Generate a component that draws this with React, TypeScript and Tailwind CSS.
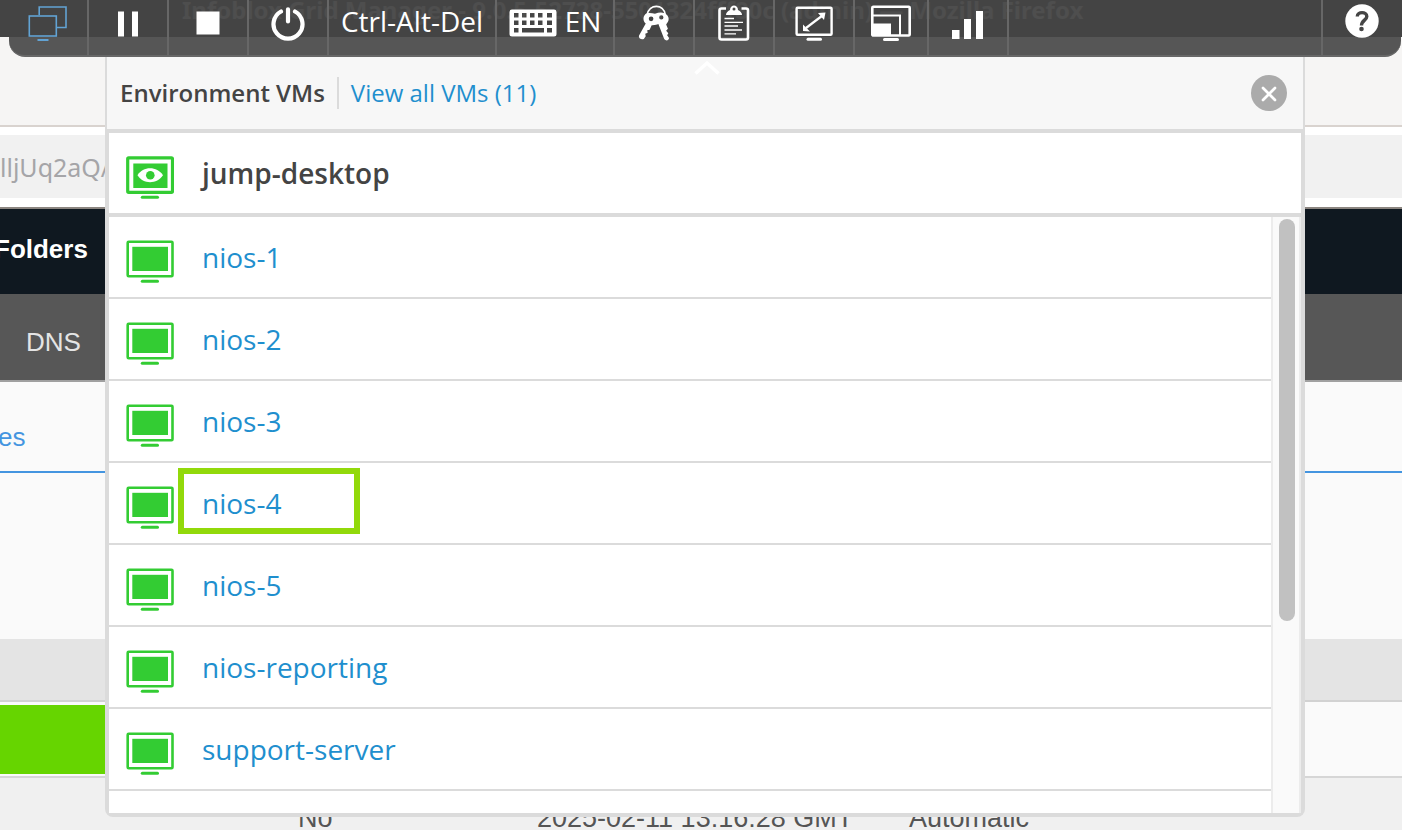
import React from "react";

const machines = ["nios-1", "nios-2", "nios-3", "nios-4", "nios-5", "nios-reporting", "support-server", "testing-win"];

function VmIcon({ active = false }: { active?: boolean }) {
  return (
    <svg viewBox="0 0 48 44" className="h-11 w-12 shrink-0" fill="none" aria-hidden="true">
      <rect x="1.7" y="1.8" width="44.800" height="34.500" rx="1" stroke="#33cc33" strokeWidth={active ? 3.2 : 2.6} />
      {active ? <rect x="7.300" y="7.500" width="34.200" height="24.500" fill="#33cc33" /> : <rect x="6.300" y="6.800" width="35.700" height="24.200" fill="#33cc33" />}
      {active && (
        <>
          <path d="M11.500 19.300C17 10 31 10 37 19.300C31 28.500 17 28.500 11.500 19.300Z" fill="#fff" />
          <circle cx="24.300" cy="19.300" r="4.300" fill="#33cc33" />
        </>
      )}
      <path d="M16.300 41.300H31.500" stroke="#33cc33" strokeWidth="3" strokeLinecap="round" />
    </svg>
  );
}

function VmsIcon() {
  return (
    <svg viewBox="0 0 40 36" className="h-9 w-10" fill="none" stroke="#62a3d4" strokeWidth="1.600" aria-hidden="true">
      <path d="M11.200 10V2H38V22.500H29" />
      <rect x="1.300" y="11" width="27" height="20" />
      <path d="M9.500 35H20.500" strokeWidth="2" />
    </svg>
  );
}

function PauseIcon() {
  return (
    <svg viewBox="0 0 22 26" className="h-[26px] w-[22px]" fill="#fff" aria-hidden="true">
      <path d="M1 0.500H7V25.500H1ZM15 0.500H21V25.500H15Z" />
    </svg>
  );
}

function StopIcon() {
  return (
    <svg viewBox="0 0 24 24" className="h-6 w-6" fill="#fff" aria-hidden="true">
      <rect y="0.500" x="0.500" width="23" height="23" />
    </svg>
  );
}

function PowerIcon() {
  return (
    <svg viewBox="0 0 34 34" className="size-[34px]" fill="none" stroke="#fff" strokeWidth="4.200" strokeLinecap="round" aria-hidden="true">
      <path d="M17 2.300V14.500M10 4.500A14.500 14.500 0 1 0 24 4.500" />
    </svg>
  );
}

function KeyboardIcon() {
  return (
    <svg viewBox="0 0 48 28" className="h-7 w-12" fill="#fff" aria-hidden="true">
      <path
        fillRule="evenodd"
        d="M3 .6H45A2.500 2.500 0 0 1 47.500 3V25A2.500 2.500 0 0 1 45 27.500H3A2.500 2.500 0 0 1 .5 25V3A2.500 2.500 0 0 1 3 .6ZM5 4V8.500H9.500V4ZM13 4V8.500H17.500V4ZM21 4V8.500H25.500V4ZM29 4V8.500H33.500V4ZM38 4V8.500H43V4ZM5 11.500V16H9.500V11.500ZM13 11.500V16H17.500V11.500ZM21 11.500V16H25.500V11.500ZM29 11.500V16H33.500V11.500ZM38 11.500V16H43V11.500ZM5 19V23.500H9.500V19ZM13 19V23.500H35V19ZM38 19V23.500H43V19Z"
      />
    </svg>
  );
}

function KeysIcon() {
  return (
    <svg viewBox="0 0 32 37" className="h-9 w-8" fill="#fff" aria-hidden="true">
      <path d="M9 10C11-1.500 26-1.500 27.500 10" fill="none" stroke="#fff" strokeWidth="1.800" />
      <path
        fillRule="evenodd"
        d="M7 9.500C10 7.500 14 8.500 17 9C22 7 27 7 30 11C32.500 15 30 18 28.500 20L30.300 24.500L28.500 26.500L30.700 29L29.500 31L31.500 34C31 37 28 37 26.500 35L20.500 19.500C17 21 14 20.500 13.500 21L11.500 25.500L9 26L9.500 28.500L7 29.500L7.500 32L5.500 35C3 36 0 34.500 .5 31.500L7.500 19C4 16 5 11.500 7 9.500ZM13 11.800A2.400 2.400 0 1 0 13 16.600A2.400 2.400 0 1 0 13 11.800ZM23.500 10.600A2.200 2.200 0 1 0 23.500 15A2.200 2.200 0 1 0 23.500 10.600Z"
      />
    </svg>
  );
}

function ClipboardIcon() {
  return (
    <svg viewBox="0 0 32 36" className="h-9 w-8" fill="none" stroke="#fff" aria-hidden="true">
      <path d="M8 3.500H3.500Q1.500 3.500 1.500 5.500V32.500Q1.500 34.500 3.500 34.500H28Q30 34.500 30 32.500V5.500Q30 3.500 28 3.500H23.500" strokeWidth="2.600" />
      <path fillRule="evenodd" d="M12 5C12-1 20-1 20 5Q24 7 24 10H8Q8 7 12 5ZM16 2.600A1.500 1.500 0 1 0 16 5.600A1.500 1.500 0 1 0 16 2.600Z" fill="#fff" stroke="none" />
      <path d="M6.500 13.500H16M6.500 17.300H25M6.500 21H20M6.500 25H24M6.500 28.800H18" strokeWidth="1.300" />
    </svg>
  );
}

function ExpandIcon() {
  return (
    <svg viewBox="0 0 38 36" className="h-9 w-[38px]" fill="none" stroke="#fff" aria-hidden="true">
      <rect x="1.600" y="2.800" width="35" height="27" rx="1" strokeWidth="2.400" />
      <path d="M11 23L27.500 10.500" strokeWidth="2.200" />
      <path d="M23 8L30.500 7.500L29 15ZM8 19.500V26L15 26.500Z" fill="#fff" stroke="none" />
      <path d="M13 34.300H25.500" strokeWidth="3" strokeLinecap="round" />
    </svg>
  );
}

function ResizeIcon() {
  return (
    <svg viewBox="0 0 40 36" className="h-9 w-10" fill="none" stroke="#fff" aria-hidden="true">
      <rect x="1.300" y="1.800" width="37.400" height="28.700" rx="1" strokeWidth="2.600" />
      <path d="M2 10.500H29V30" strokeWidth="2" />
      <path d="M1 18.500H20V31H1Z" fill="#fff" stroke="none" />
      <path d="M13.500 34.500H26.500" strokeWidth="3" strokeLinecap="round" />
    </svg>
  );
}

function SignalIcon() {
  return (
    <svg viewBox="0 0 32 28" className="h-7 w-8" fill="#fff" aria-hidden="true">
      <path d="M0 19H7.500V28H0ZM12 8H19V28H12ZM24 0H31V28H24Z" />
    </svg>
  );
}

function HelpIcon() {
  return (
    <svg viewBox="0 0 34 34" className="size-[34px]" fill="none" aria-hidden="true">
      <circle cx="17" cy="17" r="16.700" fill="#fff" />
      <path d="M12.300 12.500C12.300 7.300 21.800 7.300 21.800 12.500C21.800 16 16.500 16.500 16.500 21.500" stroke="#454545" strokeWidth="3.400" />
      <circle cx="16.500" cy="25" r="2.300" fill="#454545" />
    </svg>
  );
}

function ToolButton({ label, width, children }: { label: string; width: string; children: React.ReactNode }) {
  return (
    <button type="button" aria-label={label} className={`flex shrink-0 items-start justify-center border-r-2 border-[#676767] pt-[5px] ${width}`}>
      {children}
    </button>
  );
}

function Toolbar() {
  return (
    <header className="absolute inset-x-0 top-0 z-20 mr-px ml-[9px] flex h-[57px] overflow-hidden rounded-b-2xl border-b-2 border-[#676767] bg-[#454545]/90 text-white">
      <ToolButton label="Virtual machines" width="w-20"><VmsIcon /></ToolButton>
      <ToolButton label="Pause" width="w-20"><span className="pt-1.5"><PauseIcon /></span></ToolButton>
      <ToolButton label="Stop" width="w-20"><span className="pt-1.5"><StopIcon /></span></ToolButton>
      <ToolButton label="Power" width="w-20"><span className="pt-0.5"><PowerIcon /></span></ToolButton>
      <button type="button" className="flex w-[168px] shrink-0 justify-center border-r-2 border-[#676767] pt-[3px] text-[28px] leading-9">Ctrl-Alt-Del</button>
      <button type="button" className="flex w-[118px] shrink-0 justify-center gap-2 border-r-2 border-[#676767] pt-[3px] text-[28px] leading-9">
        <span className="pt-1.5"><KeyboardIcon /></span>EN
      </button>
      <ToolButton label="Credentials" width="w-20"><KeysIcon /></ToolButton>
      <ToolButton label="Clipboard" width="w-20"><ClipboardIcon /></ToolButton>
      <ToolButton label="Full screen" width="w-20"><ExpandIcon /></ToolButton>
      <ToolButton label="Resize display" width="w-[74px]"><ResizeIcon /></ToolButton>
      <ToolButton label="Connection quality" width="w-20"><span className="pt-1.5"><SignalIcon /></span></ToolButton>
      <button type="button" aria-label="Help" className="ml-auto flex w-20 justify-center border-l-2 border-[#676767] pt-1">
        <HelpIcon />
      </button>
    </header>
  );
}

function BrowserPage() {
  return (
    <div className="font-['Liberation_Sans',sans-serif]">
      <div className="h-[37px] overflow-hidden whitespace-nowrap bg-[#444] pl-[182px] font-['Noto_Sans',sans-serif] text-2xl leading-5 font-bold text-[#a0a0a0]">
        Infoblox Grid Manager - 9.0.5-52728-5501324fff80c (admin) — Mozilla Firefox
      </div>
      <div className="h-[90px] border-b-2 border-[#d9d3cf] bg-[#f6f5f4]" />
      <div className="border-b-2 border-[#8b8580] bg-white pt-2 pb-[9px]">
        <div className="h-[63px] bg-[#f1f1f1] font-['Noto_Sans',sans-serif] text-[25px] leading-[65px] text-[#a5a5a8]">lljUq2aQ/</div>
      </div>
      <div className="h-[85px] overflow-hidden bg-[#0f1820] text-[26px] leading-[80px] font-bold text-white">
        <span className="-ml-1.5">Folders</span>
      </div>
      <div className="h-[88px] border-b-2 border-[#a0a0a0] bg-[#575757] pl-[26px] text-[26px] leading-[96px] text-[#e4e4e4]">DNS</div>
      <div className="h-[91px] border-b-2 border-[#4495e0] bg-[#fafafa] text-[26px] leading-[110px] text-[#4495e0]">
        <span className="-ml-0.5">es</span>
      </div>
      <div className="h-[166px] bg-[#fafafa]" />
      <div className="h-[63px] border-b-2 border-[#d2d2d2] bg-[#e4e4e4]" />
      <div className="border-b-2 border-[#d6d6d6] bg-[#fafafa] pt-[3px] pb-0.5">
        <div className="h-[69px] w-1/2 bg-[#66d500]" />
      </div>
      <div className="grid grid-cols-[239px_372px_1fr] bg-[#f0f0f0] pt-6 pl-[298px] text-[27px] leading-8 text-[#555]">
        <span>No</span>
        <span>2025-02-11 13:16:28 GMT</span>
        <span>Automatic</span>
      </div>
    </div>
  );
}

function VmPanel() {
  return (
    <section className="absolute top-14 right-[97px] left-[105px] z-10 overflow-hidden rounded-b-lg bg-[#dbdbdb] px-[2px] pb-1">
      <div className="flex h-[73px] items-center bg-[#f7f7f7] pr-4 pl-[13px] text-2xl">
        <h1 className="font-semibold text-[#444]">Environment VMs</h1>
        <a href="#all" className="ml-3 border-l-2 border-[#dbdbdb] pl-3 text-[#1f8fce]">View all VMs (11)</a>
        <button type="button" aria-label="Close" className="ml-auto flex size-9 items-center justify-center rounded-full bg-[#ababab]">
          <svg viewBox="0 0 16 16" className="mt-0.5 size-4" stroke="#fff" strokeWidth="2.700" strokeLinecap="round" aria-hidden="true">
            <path d="M2 2L14 14M14 2L2 14" />
          </svg>
        </button>
      </div>
      <div className="px-[2px] pt-1">
        <div className="flex h-20 items-center bg-white pl-[17px] text-[28px] font-semibold text-[#444]">
          <span className="pt-2.5"><VmIcon active /></span>
          <span className="ml-7">jump-desktop</span>
        </div>
        <div className="mt-1 flex h-[596px] overflow-hidden bg-white">
          <ul className="min-w-0 flex-1">
            {machines.map((name) => (
              <li key={name} className="flex h-[82px] items-center border-b-2 border-[#dbdbdb] pl-[17px] text-[28px]">
                <span className="pt-2.5"><VmIcon /></span>
                {name === "nios-4" ? (
                  <a href="#nios-4" className="mb-1 ml-1 flex h-[66px] w-[182px] items-center border-[6px] border-[#92d90a] pt-1 pl-[18px] text-[#1f8fce]">{name}</a>
                ) : (
                  <a href={`#${name}`} className="ml-7 text-[#1f8fce]">{name}</a>
                )}
              </li>
            ))}
          </ul>
          <div className="flex w-[30px] shrink-0 border-r-2 border-l-2 border-[#ececec] bg-[#fafafa] pt-0.5 pl-1.5">
            <div className="h-[402px] w-4 rounded-full bg-[#c1c1c1]" />
          </div>
        </div>
      </div>
    </section>
  );
}

export default function App() {
  return (
    <main className="relative h-screen overflow-hidden bg-[#f0f0f0] font-['Open_Sans',sans-serif]">
      <BrowserPage />
      <VmPanel />
      <Toolbar />
      <svg viewBox="0 0 26 16" className="absolute top-[60px] left-1/2 z-20 ml-[-7px] h-4 w-6.5" fill="none" stroke="#fff" strokeWidth="3.500" aria-hidden="true">
        <path d="M1.500 13.500L13 3L24.500 13.500" />
      </svg>
    </main>
  );
}
